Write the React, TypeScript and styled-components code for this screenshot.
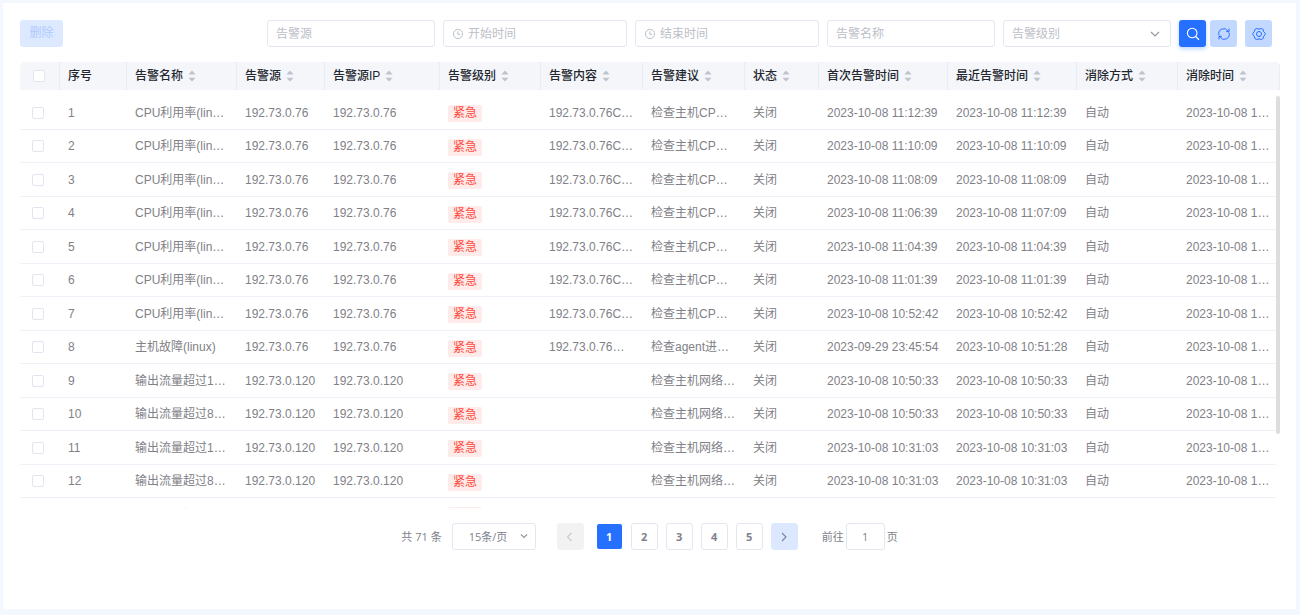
import React, { useState } from "react";
import styled, { createGlobalStyle, css } from "styled-components";

const GlobalStyle = createGlobalStyle`
  *, *::before, *::after { box-sizing: border-box; }
  body {
    margin: 0;
    background: #f3f8ff;
    color: #7f8187;
    font: 12px/16px "Liberation Sans", "Noto Sans CJK SC", sans-serif;
  }
  button, input, select { font: inherit; color: inherit; margin: 0; }
`;

const Page = styled.div`
  display: flex;
  flex-direction: column;
  min-height: 100vh;
  padding: 3px 4px 6px 3px;
`;

const Panel = styled.main`
  flex: 1;
  padding: 17px 16px 17px 17px;
  background: #fff;
`;

const Toolbar = styled.div`
  display: flex;
  align-items: center;
  justify-content: space-between;
  gap: 8px;
  padding-right: 8px;
`;

const Filters = styled.form`
  display: flex;
  align-items: center;
  gap: 8px;
`;

const ButtonGroup = styled.div`
  display: flex;
  gap: 4px;
`;

const DeleteButton = styled.button`
  width: 43px;
  height: 27px;
  padding: 0 0 1px;
  border: 0;
  border-radius: 3px;
  background: #dde9ff;
  color: #b0c9ff;
`;

const IconButton = styled.button<{ $primary?: boolean }>`
  display: grid;
  place-items: center;
  width: 27px;
  height: 27px;
  padding: 0;
  border: 0;
  border-radius: 3px;
  background: #c3d8ff;
  color: #2b6dff;
  cursor: pointer;
  ${(p) =>
    p.$primary &&
    css`
      background: #2670ff;
      color: #fff;
      box-shadow: 0 2px 4px rgba(38, 112, 255, 0.3);
    `}
`;

const boxed = css`
  border: 1px solid #e4e7f0;
  border-radius: 3px;
  background: #fff;
`;

const Field = styled.label<{ $wide?: boolean }>`
  ${boxed}
  display: flex;
  align-items: center;
  gap: 4px;
  width: ${(p) => (p.$wide ? 184 : 168)}px;
  height: 27px;
  padding: 0 8px;
  color: #bcc0c8;

  input,
  select {
    flex: 1;
    min-width: 0;
    width: 100%;
    padding: 0;
    border: 0;
    outline: 0;
    background: transparent;
    appearance: none;
  }
  input::placeholder {
    color: #bcc0c8;
    opacity: 1;
  }
`;

const TableFrame = styled.div`
  position: relative;
  margin-top: 15px;
`;

const TableScroll = styled.div`
  height: 446px;
  overflow: auto;
  scrollbar-width: none;
`;

const Table = styled.table`
  width: 100%;
  table-layout: fixed;
  border-collapse: separate;
  border-spacing: 0;
`;

const HeadCell = styled.th`
  position: sticky;
  top: 0;
  z-index: 1;
  height: 34px;
  padding: 0;
  background: #fff;
  color: #23262e;
  font-weight: 500;
  text-align: left;
  white-space: nowrap;

  &:first-child > div { border-top-left-radius: 5px; padding-left: 13px; }
  &:last-child > div { border-top-right-radius: 5px; }
`;

const HeadInner = styled.div`
  display: flex;
  align-items: center;
  gap: 5px;
  height: 28px;
  margin-bottom: 6px;
  padding-left: 8px;
  border-right: 1px solid #e9ecf4;
  background: #f4f6fa;
`;

const SortButton = styled.button`
  display: flex;
  padding: 0;
  border: 0;
  background: none;
  color: #bfc3cc;
  cursor: pointer;
`;

const Row = styled.tr`
  height: 34px;
  &:nth-child(even) { height: 33px; }
`;

const Cell = styled.td`
  padding: 0 0 0 8px;
  border-bottom: 1px solid #eff1f9;
  white-space: nowrap;
  &:first-child { padding-left: 12px; }
`;

const Checkbox = styled.input.attrs({ type: "checkbox" })`
  display: block;
  width: 12px;
  height: 12px;
  border: 1px solid #e2e5ef;
  border-radius: 2px;
  background: #fff;
  appearance: none;
  &:checked { background: #2670ff; border-color: #2670ff; }
`;

const Tag = styled.span`
  display: block;
  width: max-content;
  height: 17px;
  margin-top: 2px;
  padding: 0 5px;
  border-radius: 2px;
  background: #ffebe9;
  color: #ff4a3d;
  line-height: 17px;
`;

const ScrollTrack = styled.div`
  position: absolute;
  top: 34px;
  right: 0;
  bottom: 0;
  width: 4px;
  background: #fff;
`;

const ScrollThumb = styled.div`
  height: 82%;
  border-radius: 2px;
  background: #dddddd;
`;

const Pager = styled.nav`
  display: flex;
  align-items: center;
  justify-content: center;
  margin-top: 15px;
  padding-right: 1px;
  color: #7d828c;
  font: 11px/16px "Open Sans", "Noto Sans CJK SC", sans-serif;
`;

const PageSize = styled.label`
  ${boxed}
  position: relative;
  width: 84px;
  height: 27px;
  margin: 0 21px 0 10px;

  select {
    width: 100%;
    height: 100%;
    padding: 0 16px;
    border: 0;
    outline: 0;
    background: transparent;
    appearance: none;
  }
  svg {
    position: absolute;
    top: 5px;
    right: 4px;
    pointer-events: none;
  }
`;

const PageList = styled.div`
  display: flex;
  gap: 8px;
  margin: 0 8px 0 12px;
`;

const PageButton = styled.button<{ $kind?: "active" | "off" | "next" }>`
  ${boxed}
  display: grid;
  place-items: center;
  width: 27px;
  height: 27px;
  padding: 0;
  color: #7d828c;
  font-weight: 700;
  cursor: pointer;
  ${(p) => p.$kind === "active" && css`background: #2670ff; border-color: #fff; color: #fff;`}
  ${(p) => p.$kind === "off" && css`background: #f2f2f3; border-color: #f2f2f3; color: #c8cbd1;`}
  ${(p) => p.$kind === "next" && css`background: #dce8ff; border-color: #dce8ff;`}
`;

const Jump = styled.label`
  display: flex;
  align-items: center;
  gap: 2px;
  margin-left: 24px;

  input {
    ${boxed}
    width: 39px;
    height: 27px;
    padding: 0;
    text-align: center;
  }
`;

const ClockIcon = () => (
  <svg width="12" height="12" viewBox="0 0 12 12" fill="none" stroke="currentColor">
    <circle cx="6" cy="6" r="4.6" />
    <path d="M5.8 3.3V6.3H8.3" />
  </svg>
);

const Chevron = ({ d = "M3 5l4 4 4-4" }: { d?: string }) => (
  <svg width="14" height="14" viewBox="0 0 14 14" fill="none" stroke="currentColor" strokeWidth="1.1">
    <path d={d} />
  </svg>
);

const DropArrow = styled.span`
  display: flex;
  color: #8f949e;
`;

const SearchIcon = () => (
  <svg width="14" height="14" viewBox="0 0 14 14" fill="none" stroke="currentColor" strokeWidth="1.1" strokeLinecap="round">
    <circle cx="6.2" cy="6" r="4.8" />
    <path d="M9.7 9.5l3 3" />
  </svg>
);

const RefreshIcon = () => (
  <svg width="14" height="14" viewBox="0 0 14 14" fill="none" stroke="currentColor" strokeWidth="1" strokeLinecap="round" strokeLinejoin="round">
    <path d="M2 8.2A5 5 0 0 1 11 4" />
    <path d="M12 5.8A5 5 0 0 1 3 10" />
    <path d="M12 2v2.6H9.6" />
    <path d="M2 12V9.4h2.4" />
  </svg>
);

const SettingIcon = () => (
  <svg width="14" height="14" viewBox="0 0 14 14" fill="none" stroke="currentColor" strokeWidth="1" strokeLinejoin="round">
    <path d="M4.7 1.5Q7 2.7 9.3 1.5L11.2 2.6Q11.2 5.2 13.2 6.3V7.7Q11.2 8.8 11.2 11.4L9.3 12.5Q7 11.3 4.7 12.5L2.8 11.4Q2.8 8.8 .8 7.7V6.3Q2.8 5.2 2.8 2.6Z" />
    <circle cx="7" cy="7" r="2.5" />
  </svg>
);

const SortIcon = () => (
  <svg width="8" height="12" viewBox="0 0 8 12" fill="currentColor">
    <path d="M4 .5L7.6 4.5H.4Z" />
    <path d="M4 11.5L7.6 7.8H.4Z" />
  </svg>
);

const columns = [
  { title: "序号", width: 67, plain: true },
  { title: "告警名称", width: 110 },
  { title: "告警源", width: 88 },
  { title: "告警源IP", width: 115 },
  { title: "告警级别", width: 101 },
  { title: "告警内容", width: 102 },
  { title: "告警建议", width: 102 },
  { title: "状态", width: 74 },
  { title: "首次告警时间", width: 129 },
  { title: "最近告警时间", width: 129 },
  { title: "消除方式", width: 101 },
  { title: "消除时间", width: 102 },
];

const cpu = (first: string, last = first) => [
  "CPU利用率(lin…", "192.73.0.76", "192.73.0.76C…", "检查主机CP…",
  `2023-10-08 ${first}`, `2023-10-08 ${last}`,
];
const flow = (limit: number, time: string) => [
  `输出流量超过${limit}…`, "192.73.0.120", "", "检查主机网络…",
  `2023-10-08 ${time}`, `2023-10-08 ${time}`,
];

const alarms = [
  cpu("11:12:39"),
  cpu("11:10:09"),
  cpu("11:08:09"),
  cpu("11:06:39", "11:07:09"),
  cpu("11:04:39"),
  cpu("11:01:39"),
  cpu("10:52:42"),
  ["主机故障(linux)", "192.73.0.76", "192.73.0.76…", "检查agent进…", "2023-09-29 23:45:54", "2023-10-08 10:51:28"],
  flow(1, "10:50:33"),
  flow(8, "10:50:33"),
  flow(1, "10:31:03"),
  flow(8, "10:31:03"),
  flow(1, "10:11:33"),
  flow(8, "10:11:33"),
  flow(1, "09:52:03"),
];

export default function App() {
  const [page, setPage] = useState(1);
  return (
    <Page>
      <GlobalStyle />
      <Panel>
        <Toolbar>
          <DeleteButton type="button" disabled>删除</DeleteButton>
          <Filters onSubmit={(e) => e.preventDefault()}>
            <Field><input aria-label="告警源" placeholder="告警源" /></Field>
            <Field $wide><ClockIcon /><input aria-label="开始时间" placeholder="开始时间" /></Field>
            <Field $wide><ClockIcon /><input aria-label="结束时间" placeholder="结束时间" /></Field>
            <Field><input aria-label="告警名称" placeholder="告警名称" /></Field>
            <Field>
              <select aria-label="告警级别" defaultValue="">
                <option value="">告警级别</option>
                <option value="urgent">紧急</option>
              </select>
              <DropArrow><Chevron /></DropArrow>
            </Field>
            <ButtonGroup>
              <IconButton type="submit" $primary aria-label="搜索"><SearchIcon /></IconButton>
              <IconButton type="reset" aria-label="刷新"><RefreshIcon /></IconButton>
            </ButtonGroup>
            <IconButton type="button" aria-label="设置"><SettingIcon /></IconButton>
          </Filters>
        </Toolbar>

        <TableFrame>
          <TableScroll>
            <Table>
              <colgroup>
                <col width={40} />
                {columns.map((c) => <col key={c.title} width={c.width} />)}
              </colgroup>
              <thead>
                <tr>
                  <HeadCell><HeadInner><Checkbox aria-label="全选" /></HeadInner></HeadCell>
                  {columns.map((c) => (
                    <HeadCell key={c.title} scope="col">
                      <HeadInner>
                        {c.title}
                        {!c.plain && <SortButton type="button" aria-label={`按${c.title}排序`}><SortIcon /></SortButton>}
                      </HeadInner>
                    </HeadCell>
                  ))}
                </tr>
              </thead>
              <tbody>
                {alarms.map(([name, source, content, advice, first, last], i) => {
                  const cleared = `${last.slice(0, 12)}…`;
                  const values = [i + 1, name, source, source, <Tag>紧急</Tag>, content, advice, "关闭", first, last, "自动", cleared];
                  return (
                    <Row key={i}>
                      <Cell><Checkbox aria-label={`选择第${i + 1}行`} /></Cell>
                      {values.map((value, n) => (
                        <Cell key={columns[n].title}>{value}</Cell>
                      ))}
                    </Row>
                  );
                })}
              </tbody>
            </Table>
          </TableScroll>
          <ScrollTrack><ScrollThumb /></ScrollTrack>
        </TableFrame>

        <Pager aria-label="分页">
          <span>共 71 条</span>
          <PageSize>
            <select aria-label="每页条数" defaultValue="15">
              <option value="15">15条/页</option>
              <option value="30">30条/页</option>
            </select>
            <DropArrow><Chevron d="M4 5.5l3 3 3-3" /></DropArrow>
          </PageSize>
          <PageButton $kind="off" disabled aria-label="上一页"><Chevron d="M8.5 3l-4 4 4 4" /></PageButton>
          <PageList>
            {[1, 2, 3, 4, 5].map((n) => (
              <PageButton key={n} $kind={n === page ? "active" : undefined} onClick={() => setPage(n)}>{n}</PageButton>
            ))}
          </PageList>
          <PageButton $kind="next" aria-label="下一页" onClick={() => setPage(Math.min(5, page + 1))}>
            <Chevron d="M5 3l4 4-4 4" />
          </PageButton>
          <Jump>
            前往
            <input aria-label="页码" value={page} onChange={(e) => setPage(Number(e.target.value) || 1)} />
            页
          </Jump>
        </Pager>
      </Panel>
    </Page>
  );
}
